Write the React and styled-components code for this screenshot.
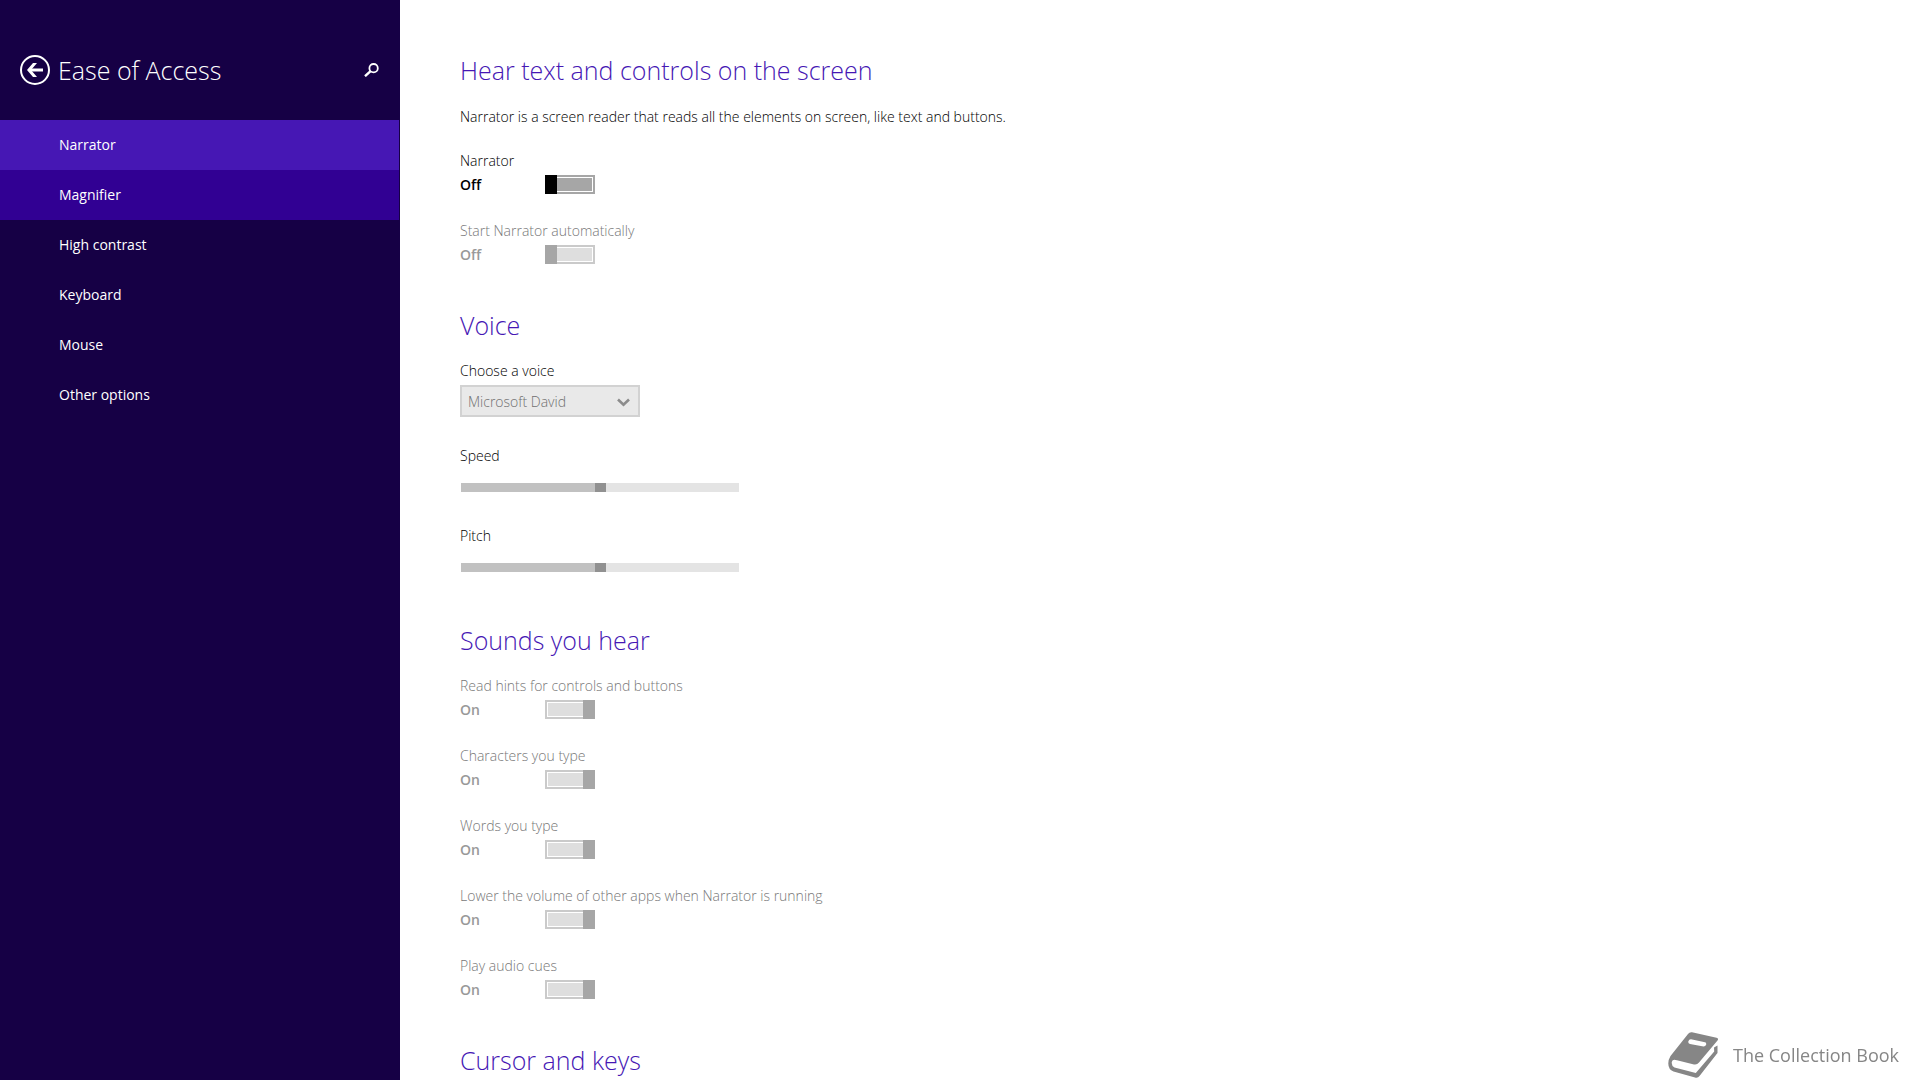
import React, { useState } from "react";
import styled, { createGlobalStyle } from "styled-components";

const GlobalStyle = createGlobalStyle`
    *, *::before, *::after {
        box-sizing: border-box;
    }

    body {
        margin: 0;
        background: #ffffff;
        color: #000000;
        font-family: "Open Sans", "Noto Sans", sans-serif;
        font-size: 14px;
        line-height: 20px;
    }
`;

const Layout = styled.div`
    display: flex;
    min-height: 100vh;
`;

const Sidebar = styled.aside`
    flex: 0 0 400px;
    background: #160045;
    color: #ffffff;
    padding-right: 1px;
`;

const SidebarHeader = styled.header`
    display: flex;
    align-items: center;
    gap: 8px;
    height: 120px;
    padding: 40px 20px 20px;
`;

const IconButton = styled.button`
    display: flex;
    padding: 0;
    border: none;
    background: none;
    color: inherit;
    cursor: pointer;
`;

const PageTitle = styled.h1`
    flex: 1;
    margin: 0;
    font-size: 25px;
    line-height: 36px;
    font-weight: 300;
`;

const NavItem = styled.a`
    display: flex;
    align-items: center;
    height: 50px;
    padding-left: 59px;
    color: #ffffff;
    text-decoration: none;
    background: ${({ $state }) =>
        $state === "selected" ? "#4617b4" : $state === "hover" ? "#310093" : "transparent"};
`;

const Content = styled.main`
    flex: 1;
    padding: 52px 60px 0;
    font-weight: 300;
`;

const Section = styled.section`
    margin-bottom: 42px;

    &:last-child {
        margin-bottom: 0;
    }
`;

const SectionTitle = styled.h2`
    margin: 0 0 18px;
    color: #4617b4;
    font-size: 25px;
    line-height: 36px;
    font-weight: 300;
`;

const Description = styled.p`
    margin: 0 0 23px;
    line-height: 22px;
`;

const Stack = styled.div`
    display: flex;
    flex-direction: column;
    align-items: flex-start;
    gap: 26px;
`;

const ToggleField = styled.label`
    display: flex;
    flex-direction: column;
    gap: 4px;
    color: ${({ $disabled }) => ($disabled ? "#787878" : "#000000")};
`;

const ToggleRow = styled.span`
    display: flex;
    height: 20px;
    font-weight: 600;
    color: ${({ $disabled }) => ($disabled ? "#999999" : "#000000")};
`;

const ToggleState = styled.span`
    width: 85px;
`;

const Switch = styled.input`
    appearance: none;
    width: 50px;
    height: 19px;
    margin: 0;
    --thumb: #000000;
    --fill: #a6a6a6;
    background:
        linear-gradient(var(--thumb), var(--thumb)) left / 12px 19px no-repeat,
        linear-gradient(var(--fill), var(--fill)) center / 44px 13px no-repeat,
        linear-gradient(#ffffff, #ffffff) center / 46px 15px no-repeat,
        #a6a6a6;

    &:checked {
        background-position: right, center, center, center;
        --fill: #4617b4;
    }

    &:disabled {
        --thumb: #a6a6a6;
        --fill: #dedede;
        background-color: #cacaca;
    }
`;

const Field = styled.div`
    display: flex;
    flex-direction: column;
    gap: ${({ $gap }) => $gap}px;
    margin-bottom: ${({ $space }) => $space}px;
`;

const SelectBox = styled.div`
    display: grid;
    width: 180px;
    align-items: center;

    & > * {
        grid-area: 1 / 1;
    }

    svg {
        justify-self: end;
        margin: 2px 10px 0 0;
        pointer-events: none;
    }
`;

const VoiceSelect = styled.select`
    appearance: none;
    width: 100%;
    height: 32px;
    padding: 2px 6px 0;
    border: 2px solid #d2d2d2;
    border-radius: 0;
    background: #e9e9e9;
    color: #707070;
    font: inherit;
    opacity: 1;
`;

const Slider = styled.input`
    appearance: none;
    width: 278px;
    height: 9px;
    margin: 0 1px;
    background: linear-gradient(to right, #c1c1c1 50%, #e4e4e4 50%);

    &::-webkit-slider-thumb {
        appearance: none;
        width: 11px;
        height: 9px;
        background: #919191;
    }
`;

const Watermark = styled.div`
    position: fixed;
    right: 21px;
    bottom: 2px;
    display: flex;
    align-items: center;
    gap: 14px;
    color: #868686;
    font-size: 18px;
`;

const navItems = [
    { label: "Narrator", state: "selected" },
    { label: "Magnifier", state: "hover" },
    { label: "High contrast" },
    { label: "Keyboard" },
    { label: "Mouse" },
    { label: "Other options" },
];

const soundOptions = [
    "Read hints for controls and buttons",
    "Characters you type",
    "Words you type",
    "Lower the volume of other apps when Narrator is running",
    "Play audio cues",
];

const BackIcon = () => (
    <svg width="30" height="30" viewBox="0 0 30 30" fill="none" stroke="currentColor">
        <circle cx="15" cy="15" r="14" strokeWidth="2" />
        <path d="M23 15H9" strokeWidth="3" />
        <path d="M7 15l6-7h4l-6 7 6 7h-4z" fill="currentColor" stroke="none" />
    </svg>
);

const SearchIcon = () => (
    <svg width="15" height="14" viewBox="0 0 15 14" fill="none" stroke="currentColor">
        <circle cx="9.6" cy="5.2" r="4.2" strokeWidth="1.8" />
        <path d="M6.6 8.2L1 13.2" strokeWidth="2.4" />
    </svg>
);

const ChevronIcon = () => (
    <svg width="13" height="9" viewBox="0 0 13 9" fill="none" stroke="#8c8c8c" strokeWidth="2.6">
        <path d="M1 1.5l5.5 5.2L12 1.5" />
    </svg>
);

const BookIcon = () => (
    <svg width="51" height="46" viewBox="0 0 51 46" fill="currentColor">
        <path
            fillRule="evenodd"
            d="M24 0.2L48.5 5.8Q51 6.5 49.5 8.5L31 30.5Q29 33 26 32.4L9 28.2Q4.5 26.5 3.8 30Q3.3 34 6.5 35.5L27.8 41L46.2 19.5L46 15.5L49.5 13.5V21L31.5 44Q30 46.2 27 45.5L5.5 39.5Q0.3 37.5 0.3 31.5Q0.3 27.5 2.5 24L20 2Q21.5 -0.2 24 0.2ZM23 7.3Q21 7.2 20.3 9.5Q20 11.5 22 12L35.5 14.5Q37.5 14.3 38.2 12.5Q38.5 10.5 37 10.2Z"
        />
    </svg>
);

const Toggle = ({ label, defaultOn = false, disabled = false }) => {
    const [on, setOn] = useState(defaultOn);

    return (
        <ToggleField $disabled={disabled}>
            {label}
            <ToggleRow $disabled={disabled}>
                <ToggleState>{on ? "On" : "Off"}</ToggleState>
                <Switch
                    type="checkbox"
                    role="switch"
                    checked={on}
                    disabled={disabled}
                    onChange={(e) => setOn(e.target.checked)}
                />
            </ToggleRow>
        </ToggleField>
    );
};

const App = () => {
    return (
        <>
            <GlobalStyle />
            <Layout>
                <Sidebar>
                    <SidebarHeader>
                        <IconButton aria-label="Back">
                            <BackIcon />
                        </IconButton>
                        <PageTitle>Ease of Access</PageTitle>
                        <IconButton aria-label="Search">
                            <SearchIcon />
                        </IconButton>
                    </SidebarHeader>
                    <nav>
                        {navItems.map(({ label, state }) => (
                            <NavItem key={label} href="#" $state={state}>
                                {label}
                            </NavItem>
                        ))}
                    </nav>
                </Sidebar>

                <Content>
                    <Section>
                        <SectionTitle>Hear text and controls on the screen</SectionTitle>
                        <Description>
                            Narrator is a screen reader that reads all the elements on screen, like text and buttons.
                        </Description>
                        <Stack>
                            <Toggle label="Narrator" />
                            <Toggle label="Start Narrator automatically" disabled />
                        </Stack>
                    </Section>

                    <Section>
                        <SectionTitle>Voice</SectionTitle>
                        <Field $gap={4} $space={29}>
                            <label htmlFor="voice">Choose a voice</label>
                            <SelectBox>
                                <VoiceSelect id="voice" disabled>
                                    <option>Microsoft David</option>
                                </VoiceSelect>
                                <ChevronIcon />
                            </SelectBox>
                        </Field>
                        <Field $gap={17} $space={34}>
                            <label htmlFor="speed">Speed</label>
                            <Slider id="speed" type="range" defaultValue={50} disabled />
                        </Field>
                        <Field $gap={17} $space={50}>
                            <label htmlFor="pitch">Pitch</label>
                            <Slider id="pitch" type="range" defaultValue={50} disabled />
                        </Field>
                    </Section>

                    <Section>
                        <SectionTitle>Sounds you hear</SectionTitle>
                        <Stack>
                            {soundOptions.map((label) => (
                                <Toggle key={label} label={label} defaultOn disabled />
                            ))}
                        </Stack>
                    </Section>

                    <Section>
                        <SectionTitle>Cursor and keys</SectionTitle>
                    </Section>
                </Content>
            </Layout>

            <Watermark>
                <BookIcon />
                The Collection Book
            </Watermark>
        </>
    );
};

export default App;
